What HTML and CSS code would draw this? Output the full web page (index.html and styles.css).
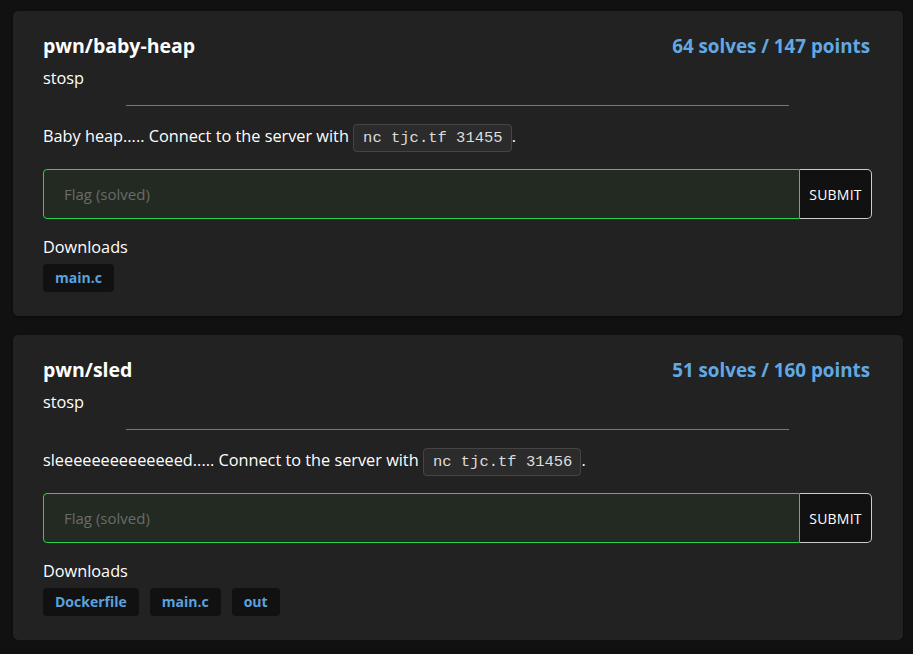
FILE: index.html
```html
<!DOCTYPE html>
<html>
<head>
<meta charset="utf-8">
<link rel="stylesheet" href="styles.css">
</head>
<body>
<div class="list">
  <div class="card">
    <div class="head">
      <div class="title">pwn/baby-heap</div>
      <div class="stats">64 solves / 147 points</div>
    </div>
    <div class="author">stosp</div>
    <hr class="rule">
    <p class="desc">Baby heap..... Connect to the server with <code class="code">nc tjc.tf 31455</code>.</p>
    <form class="flag">
      <input class="flag-input" type="text" placeholder="Flag (solved)">
      <button class="submit" type="button">SUBMIT</button>
    </form>
    <div class="dl-label">Downloads</div>
    <div class="tags">
      <a class="tag">main.c</a>
    </div>
  </div>
  <div class="card">
    <div class="head">
      <div class="title">pwn/sled</div>
      <div class="stats">51 solves / 160 points</div>
    </div>
    <div class="author">stosp</div>
    <hr class="rule">
    <p class="desc">sleeeeeeeeeeeeeed..... Connect to the server with <code class="code">nc tjc.tf 31456</code>.</p>
    <form class="flag">
      <input class="flag-input" type="text" placeholder="Flag (solved)">
      <button class="submit" type="button">SUBMIT</button>
    </form>
    <div class="dl-label">Downloads</div>
    <div class="tags">
      <a class="tag">Dockerfile</a>
      <a class="tag">main.c</a>
      <a class="tag">out</a>
    </div>
  </div>
</div>
</body>
</html>
```
FILE: styles.css
```css
html, body {
  margin: 0;
  background: #111;
}
body {
  font-family: "Open Sans", "Noto Sans", sans-serif;
  color: #fff;
  padding: 11px 10px 0 13px;
}
.list {
  display: flex;
  flex-direction: column;
  gap: 19px;
}
.card {
  background: #222;
  border-radius: 5px;
  padding: 22px 31px 24px 30px;
  box-shadow: 0 1px 3px rgba(0,0,0,0.4);
}
.head {
  display: flex;
  justify-content: space-between;
  align-items: baseline;
}
.title {
  font-size: 19.5px;
  font-weight: 700;
  line-height: 26px;
}
.stats {
  font-size: 18.8px;
  font-weight: 700;
  color: #62a9e3;
  line-height: 26px;
  padding-right: 2px;
}
.author {
  font-size: 16.3px;
  line-height: 24px;
  margin-top: 7px;
}
.rule {
  width: 80%;
  border: 0;
  border-top: 1px solid #777;
  margin: 15px auto 15px;
}
.desc {
  margin: 0;
  font-size: 16.3px;
  line-height: 30px;
}
.code {
  font-family: "Liberation Mono", "DejaVu Sans Mono", monospace;
  font-size: 15.5px;
  background: #2b2b2b;
  border: 1px solid #444;
  border-radius: 4px;
  padding: 4px 8px 4px 9px;
  color: #ddd;
}
.flag {
  display: flex;
  margin: 16px 0 0;
  height: 50px;
}
.flag-input {
  flex: 1;
  background: #222a22;
  border: 1px solid #2bd24f;
  border-radius: 4px 0 0 4px;
  padding: 0 20px;
  font-family: inherit;
  font-size: 15px;
  color: #fff;
  outline: none;
}
.flag-input::placeholder {
  color: #6a6a6a;
}
.submit {
  width: 72px;
  background: #111;
  border: 1px solid #ccc;
  border-left: 0;
  border-radius: 0 5px 5px 0;
  color: #fff;
  font-family: inherit;
  font-size: 14px;
  letter-spacing: 0.2px;
}
.dl-label {
  font-size: 16.3px;
  line-height: 24px;
  margin-top: 16px;
}
.tags {
  display: flex;
  gap: 11px;
  margin-top: 5px;
}
.tag {
  background: #111;
  border-radius: 4px;
  color: #5aa2dd;
  font-size: 14px;
  font-weight: 700;
  line-height: 28px;
  padding: 0 12px;
}
```
